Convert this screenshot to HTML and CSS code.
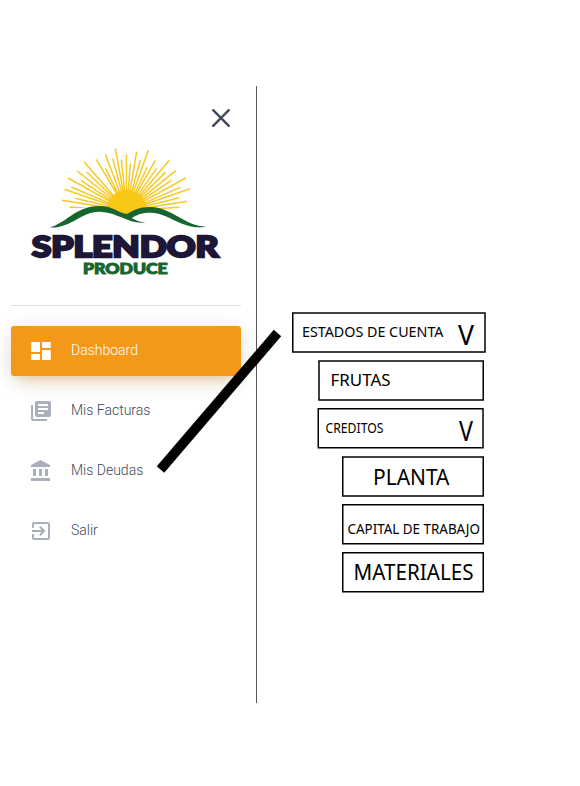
FILE: index.html
```html
<!DOCTYPE html>
<html lang="es">
<head>
<meta charset="utf-8">
<title>Splendor Produce</title>
<link rel="stylesheet" href="styles.css">
</head>
<body>
<div class="page">
  <aside class="sidebar">
    <div class="close-row">
      <svg class="close" viewBox="0 0 20 20"><path d="M2.200 2.200 17.800 17.800M17.800 2.200 2.200 17.800"/></svg>
    </div>
    <svg class="logo" viewBox="0 0 630 435">
      <g class="rays">
        <path d="M320 212 148 201M320 212 126 181M320 212 166 175M320 212 133 148M320 212 154 141M320 212 144 114M320 212 183 121M320 212 172 93M320 212 200 96M320 212 192 65M320 212 229 58M320 212 256 84M320 212 256 43M320 212 278 55M320 212 286 25M320 212 304 58M320 212 319 43"/>
        <path d="M320 212 331 70M320 212 350 35M320 212 361 60M320 212 385 31M320 212 382 81M320 212 406 61M320 212 410 85M320 212 448 61M320 212 436 97M320 212 467 92M320 212 454 121M320 212 497 114M320 212 481 142M320 212 510 146M320 212 478 173M320 212 501 184M320 212 478 202"/>
      </g>
      <path class="sun" d="M262 207A58 56 0 0 1 378 205L318 226Z"/>
      <path class="under" d="M150 212Q195 196 240 204Q285 218 320 229Q355 207 400 207L490 214V245H140Z"/>
      <path class="hill" d="M87 262C135 254 165 198 238 198C280 198 293 218 320 222C343 210 360 200 394 201C455 203 494 258 559 260C488 272 448 219 394 218C365 217 350 225 335 234C349 242 361 247 377 247C330 255 298 218 240 215C183 213 151 268 87 262Z"/>
      <text class="brand" x="35" y="351" textLength="561" lengthAdjust="spacingAndGlyphs">SPLENDOR</text>
      <text class="brand-sub" x="189" y="403" textLength="254" lengthAdjust="spacingAndGlyphs">PRODUCE</text>
    </svg>
    <hr class="divider">
    <nav class="nav">
      <a class="item active"><svg class="icon" viewBox="0 0 24 24" preserveAspectRatio="none"><path d="M3 13h8V3H3v10zm0 8h8v-6H3v6zm10 0h8V11h-8v10zm0-18v6h8V3h-8z"/></svg><span>Dashboard</span></a>
      <a class="item"><svg class="icon" viewBox="0 0 24 24"><path d="M4 6H2v14c0 1.100.9 2 2 2h14v-2H4V6zm16-4H8c-1.100 0-2 .9-2 2v12c0 1.100.9 2 2 2h12c1.100 0 2-.9 2-2V4c0-1.100-.9-2-2-2zm-1 9H9V9h10v2zm-4 4H9v-2h6v2zm4-8H9V5h10v2z"/></svg><span>Mis Facturas</span></a>
      <a class="item"><svg class="icon" viewBox="0 0 24 24"><path d="M4 10v7h3v-7H4zm6 0v7h3v-7h-3zM2 22h19v-3H2v3zm14-12v7h3v-7h-3zm-4.500-9L2 6v2h19V6l-9.500-5z"/></svg><span>Mis Deudas</span></a>
      <a class="item"><svg class="icon" viewBox="0 0 24 24"><path d="M10.090 15.590 11.500 17l5-5-5-5-1.410 1.410L12.670 11H3v2h9.670l-2.580 2.590zM19 3H5c-1.110 0-2 .9-2 2v4h2V5h14v14H5v-4H3v4c0 1.100.89 2 2 2h14c1.100 0 2-.9 2-2V5c0-1.100-.9-2-2-2z"/></svg><span>Salir</span></a>
    </nav>
  </aside>
  <main class="tree">
    <svg class="box root" viewBox="0 0 194 41"><rect x=".75" y="1" width="192.250" height="39"/><text class="t15" x="10" y="24.500" textLength="141.500" lengthAdjust="spacingAndGlyphs">ESTADOS DE CUENTA</text><text class="chev" x="166" y="32.700" textLength="16" lengthAdjust="spacingAndGlyphs">V</text></svg>
    <svg class="box second" viewBox="0 0 167 41"><rect x="2" y="1" width="164.250" height="39"/><text class="t17" x="13.500" y="26" textLength="60" lengthAdjust="spacingAndGlyphs">FRUTAS</text></svg>
    <svg class="box second" viewBox="0 0 167 41"><rect x="1.250" y=".75" width="164.750" height="39"/><text class="t15" x="8.500" y="25.300" textLength="58" lengthAdjust="spacingAndGlyphs">CREDITOS</text><text class="chev" x="142" y="33" textLength="14" lengthAdjust="spacingAndGlyphs">V</text></svg>
    <svg class="box third" viewBox="0 0 143 41"><rect x=".75" y="1" width="140.500" height="39"/><text class="t21" x="31" y="29.300" textLength="76.500" lengthAdjust="spacingAndGlyphs">PLANTA</text></svg>
    <svg class="box third" viewBox="0 0 143 41"><rect x=".75" y=".75" width="140.500" height="39"/><text class="t14" x="5.500" y="30.300" textLength="132.500" lengthAdjust="spacingAndGlyphs">CAPITAL DE TRABAJO</text></svg>
    <svg class="box third" viewBox="0 0 143 41"><rect x=".75" y=".75" width="140.500" height="39"/><text class="t21" x="11.500" y="28" textLength="120" lengthAdjust="spacingAndGlyphs">MATERIALES</text></svg>
  </main>
  <svg class="connector" viewBox="0 0 130 148"><path d="M6.500 141.500 123.500 5"/></svg>
</div>
</body>
</html>
```
FILE: styles.css
```css
* { box-sizing: border-box; }
body { margin: 0; background: #fff; }
.page {
  position: relative;
  display: flex;
  width: 580px;
  height: 786px;
  padding-top: 86px;
  overflow: hidden;
}
.sidebar {
  width: 257px;
  height: 617px;
  border-right: 1px solid #56575a;
  font-family: Roboto, sans-serif;
}
.close-row {
  display: flex;
  justify-content: flex-end;
  padding: 22px 25px 0 0;
}
.close { width: 20px; height: 20px; }
.close path { stroke: #42485c; stroke-width: 2.4; stroke-linecap: round; fill: none; }
.logo { display: block; width: 210px; height: 145px; margin: 12px 0 0 20px; }
.rays { stroke: #f5ca28; stroke-width: 4.6; fill: none; }
.sun { fill: #f7c815; }
.under { fill: #fff; }
.hill { fill: #17652f; }
.brand, .brand-sub { font-family: Lato, sans-serif; font-weight: 900; }
.brand { font-size: 88px; fill: #1d1637; stroke: #1d1637; stroke-width: 7; }
.brand-sub { font-size: 43px; fill: #17652f; stroke: #17652f; stroke-width: 3; }
.divider { width: 230px; height: 1px; margin: 20px 0 20px 11px; border: 0; background: #e0e0e1; }
.nav { display: flex; flex-direction: column; gap: 10px; width: 230px; margin-left: 11px; }
.item {
  display: flex;
  align-items: center;
  gap: 18px;
  height: 50px;
  padding-left: 18px;
  border-radius: 3px;
  font-size: 14px;
  font-weight: 300;
  line-height: 30px;
  color: #3c4858;
}
.item span { margin-top: -2px; }
.icon { width: 24px; height: 24px; fill: #a9afbb; }
.active {
  background: #f49819;
  color: #fff;
  box-shadow: 0 12px 20px -10px rgba(244, 152, 25, .28), 0 4px 20px rgba(0, 0, 0, .12), 0 7px 8px -5px rgba(244, 152, 25, .2);
}
.active .icon { width: 26px; margin: 0 -1px; fill: #fff; }
.tree { display: flex; flex-direction: column; gap: 7px; padding: 226px 0 0 35px; }
.box { display: block; height: 41px; font-family: "Noto Sans", sans-serif; }
.box rect { fill: #fff; stroke: #000; stroke-width: 1.5; }
.root { width: 194px; }
.second { width: 167px; margin-left: 25px; }
.third { width: 143px; margin-left: 50px; }
.t14 { font-size: 14px; }
.t15 { font-size: 15px; }
.t17 { font-size: 16.5px; }
.t21 { font-size: 21px; }
.chev { font-size: 28px; }
.connector { position: absolute; left: 154px; top: 328px; width: 130px; height: 148px; }
.connector path { stroke: #000; stroke-width: 9.8; }
```
